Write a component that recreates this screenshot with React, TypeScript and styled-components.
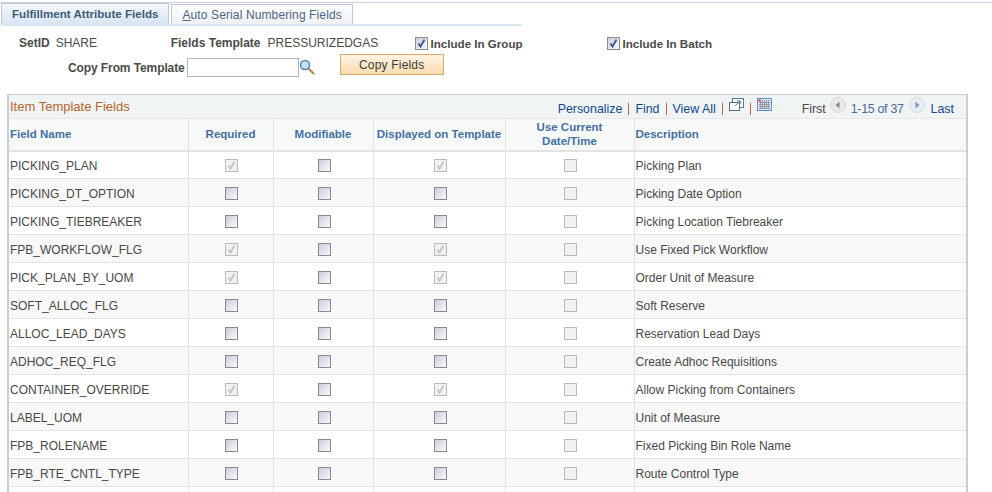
import React from "react";
import styled, { createGlobalStyle } from "styled-components";

const GlobalStyle = createGlobalStyle`
	html, body {
		margin: 0;
		height: 492px;
		overflow: hidden;
		background: #fff;
		font-family: "Liberation Sans", Arial, sans-serif;
		font-size: 12px;
		color: #3d3d3d;
	}
`;

const Page = styled.div`
	width: 992px;
	height: 492px;
	overflow: hidden;
	padding-top: 2px;
	box-sizing: border-box;
`;

const TopLine = styled.div`
	height: 1px;
	background: #c9d3df;
`;

const TabBar = styled.div`
	display: flex;
	align-items: flex-end;
	width: 521px;
	height: 21px;
	margin-left: 1px;
	gap: 2px;
	border-bottom: 2px solid #dbe6f3;
`;

const Tab = styled.div<{ $active?: boolean }>`
	height: ${(p) => (p.$active ? "21px" : "20px")};
	box-sizing: border-box;
	display: flex;
	align-items: center;
	padding: ${(p) => (p.$active ? "0 10px 2px 10px" : "0 10px")};
	border: 1px solid #bfc9d6;
	border-bottom: 0;
	font-size: ${(p) => (p.$active ? "11.6px" : "12px")};
	letter-spacing: ${(p) => (p.$active ? "0" : "0.12px")};
	font-weight: ${(p) => (p.$active ? "bold" : "normal")};
	color: ${(p) => (p.$active ? "#3f5a78" : "#4d6582")};
	background: ${(p) =>
		p.$active
			? "linear-gradient(#f3f7fc, #d9e5f3)"
			: "linear-gradient(#ffffff, #eef0f3)"};
	u {
		text-decoration: underline;
	}
`;

const FormRow = styled.div`
	display: flex;
	align-items: center;
	height: 18px;
	white-space: nowrap;
`;

const FirstRow = styled(FormRow)`
	margin-top: 8px;
	padding-left: 19px;
`;

const SecondRow = styled(FormRow)`
	margin-top: 3px;
	height: 24px;
	padding-left: 68px;
`;

const Label = styled.span`
	font-weight: bold;
	color: #4a4a4a;
`;

const CopyLabel = styled(Label)`
	letter-spacing: -0.1px;
	padding-top: 1px;
`;

const Value = styled.span<{ $width: number; $pad: number }>`
	width: ${(p) => p.$width}px;
	padding-left: ${(p) => p.$pad}px;
	box-sizing: border-box;
	color: #4a4a4a;
`;

const CheckLabel = styled.label<{ $width: number }>`
	display: flex;
	align-items: center;
	gap: 3px;
	width: ${(p) => p.$width}px;
	font-weight: bold;
	font-size: 11.6px;
	color: #4a4a4a;
`;

const TextInput = styled.input`
	width: 112px;
	height: 19px;
	box-sizing: border-box;
	margin: 0 0 0 2px;
	border: 1px solid #b5b5b5;
	background: #fff;
`;

const CopyButton = styled.button`
	width: 104px;
	height: 21px;
	margin: -6px 0 0 25px;
	padding: 1px 0 0;
	border: 1px solid #dca76a;
	background: linear-gradient(#fff4e2, #fbdcb0);
	font-family: inherit;
	font-size: 12px;
	letter-spacing: 0.2px;
	color: #3c3c3c;
`;

const Grid = styled.div`
	margin: 15px 0 0 7px;
	width: 961px;
	border: 1px solid #c9ced3;
	border-width: 1px 2px 0 2px;
	box-sizing: border-box;
`;

const GridBar = styled.div`
	display: flex;
	align-items: center;
	justify-content: space-between;
	height: 23px;
	background: #f1f4f5;
	padding: 0 12px 0 1px;
`;

const GridTitle = styled.span`
	color: #b8642c;
	font-size: 13px;
`;

const Nav = styled.div`
	display: flex;
	align-items: center;
	margin-top: 4px;
	font-size: 12.4px;
	color: #50698a;
`;

const NavLink = styled.span`
	color: #14488f;
`;

const LastLink = styled(NavLink)`
	margin-left: 6px;
`;

const Divider = styled.span`
	width: 1px;
	height: 12px;
	margin: 0 6px;
	background: #c8603c;
`;

const NavIcon = styled.span`
	display: flex;
	transform: translateY(-4px);
`;

const FirstLabel = styled.span`
	margin: 0 4px 0 30px;
	color: #4a4a4a;
`;

const PageRange = styled.span`
	color: #4b6c96;
	margin: 0 5px;
	letter-spacing: -0.3px;
`;

const Table = styled.table`
	border-collapse: collapse;
	table-layout: fixed;
	width: 957px;
`;

const HeadCell = styled.th<{ $left?: boolean }>`
	height: 32px;
	padding: 0 1px 1px;
	box-sizing: border-box;
	background: #f7f8f8;
	border-right: 1px solid #e3e3e3;
	border-bottom: 2px solid #e3e3e3;
	border-top: 1px solid #e8e8e8;
	font-size: 11.5px;
	line-height: 14px;
	color: #44709f;
	text-align: ${(p) => (p.$left ? "left" : "center")};
	&:last-child {
		border-right: 0;
	}
`;

const BodyRow = styled.tr<{ $odd: boolean }>`
	background: ${(p) => (p.$odd ? "#f8f8f8" : "#fff")};
`;

const Cell = styled.td<{ $center?: boolean }>`
	height: 28px;
	padding: ${(p) => (p.$center ? "0 0 0 2px" : "2px 1px 0")};
	box-sizing: border-box;
	border-right: 1px solid #e3e3e3;
	border-bottom: 1px solid #e3e3e3;
	font-size: 12px;
	color: #484848;
	text-align: ${(p) => (p.$center ? "center" : "left")};
	&:last-child {
		border-right: 0;
	}
`;

const Box = styled.span<{ $disabled?: boolean }>`
	display: inline-flex;
	vertical-align: middle;
	width: 13px;
	height: 13px;
	box-sizing: border-box;
	border: 1px solid ${(p) => (p.$disabled ? "#b9b9b9" : "#8a8a8a")};
	background: ${(p) =>
		p.$disabled
			? "#f1f1f1"
			: "linear-gradient(135deg, #c9cddc, #fafafc)"};
	svg {
		display: block;
	}
`;

const Check = ({ checked, disabled }: { checked?: boolean; disabled?: boolean }) => (
	<Box $disabled={disabled}>
		{checked && (
			<svg width="11" height="11" viewBox="0 0 11 11">
				<path
					d="M2.5 5.5 L4.5 8.5 L8.5 1.5"
					fill="none"
					stroke={disabled ? "#c4c4c4" : "#3f4f9a"}
					strokeWidth="1.8"
				/>
			</svg>
		)}
	</Box>
);

const SearchIcon = () => (
	<svg width="16" height="16" viewBox="0 0 16 16">
		<path d="M9.5 9.5 L14.5 14.5" stroke="#b98a4a" strokeWidth="2.4" strokeLinecap="round" />
		<circle cx="6" cy="6" r="4.5" fill="#bfe0f5" stroke="#4f86ad" strokeWidth="1.4" />
	</svg>
);

const PopupIcon = () => (
	<svg width="15" height="14" viewBox="0 0 15 14">
		<rect x="3.5" y="0.5" width="11" height="9" fill="#fff" stroke="#5a7c9c" />
		<rect x="0.5" y="4.5" width="10" height="8" fill="#fff" stroke="#5a6a7c" />
		<path d="M6 8 L11 3 M8 2.8 H11.2 V6" fill="none" stroke="#5a7c9c" />
	</svg>
);

const CalendarIcon = () => (
	<svg width="15" height="13" viewBox="0 0 15 13">
		<rect x="0.5" y="0.5" width="14" height="12" fill="#dfe3ea" stroke="#5b8fd0" />
		<path
			d="M2 4.5H13M2 6.5H13M2 8.5H13M2 10.5H13M3.5 2V11M5.5 2V11M7.5 2V11M9.5 2V11M11.5 2V11"
			stroke="#8a8f99"
			strokeWidth="0.8"
		/>
		<rect x="1.5" y="1.5" width="2" height="2" fill="#e0202a" />
	</svg>
);

const ArrowIcon = ({ right }: { right?: boolean }) => (
	<svg width="16" height="16" viewBox="0 0 16 16">
		<circle cx="8" cy="8" r="7.5" fill={right ? "#e6edf6" : "#e9e9e9"} stroke="#d5d8dc" />
		<path
			d={right ? "M6.5 4.5 L10.5 8 L6.5 11.5 Z" : "M9.5 4.5 L5.5 8 L9.5 11.5 Z"}
			fill={right ? "#7e9cc0" : "#8a8a8a"}
		/>
	</svg>
);

type FieldRow = {
	name: string;
	required?: boolean;
	displayed?: boolean;
	description: string;
};

const rows: FieldRow[] = [
	{ name: "PICKING_PLAN", required: true, displayed: true, description: "Picking Plan" },
	{ name: "PICKING_DT_OPTION", description: "Picking Date Option" },
	{ name: "PICKING_TIEBREAKER", description: "Picking Location Tiebreaker" },
	{ name: "FPB_WORKFLOW_FLG", required: true, displayed: true, description: "Use Fixed Pick Workflow" },
	{ name: "PICK_PLAN_BY_UOM", required: true, displayed: true, description: "Order Unit of Measure" },
	{ name: "SOFT_ALLOC_FLG", description: "Soft Reserve" },
	{ name: "ALLOC_LEAD_DAYS", description: "Reservation Lead Days" },
	{ name: "ADHOC_REQ_FLG", description: "Create Adhoc Requisitions" },
	{ name: "CONTAINER_OVERRIDE", required: true, displayed: true, description: "Allow Picking from Containers" },
	{ name: "LABEL_UOM", description: "Unit of Measure" },
	{ name: "FPB_ROLENAME", description: "Fixed Picking Bin Role Name" },
	{ name: "FPB_RTE_CNTL_TYPE", description: "Route Control Type" },
];

const App = () => (
	<Page>
		<GlobalStyle />
		<TopLine />
		<TabBar>
			<Tab $active>Fulfillment Attribute Fields</Tab>
			<Tab>
				<span>
					<u>A</u>uto Serial Numbering Fields
				</span>
			</Tab>
		</TabBar>
		<FirstRow>
			<Label>SetID</Label>
			<Value $width={121} $pad={6}>SHARE</Value>
			<Label>Fields Template</Label>
			<Value $width={154} $pad={7}>PRESSURIZEDGAS</Value>
			<CheckLabel $width={192}>
				<Check checked />
				Include In Group
			</CheckLabel>
			<CheckLabel $width={140}>
				<Check checked />
				Include In Batch
			</CheckLabel>
		</FirstRow>
		<SecondRow>
			<CopyLabel>Copy From Template</CopyLabel>
			<TextInput />
			<SearchIcon />
			<CopyButton>Copy Fields</CopyButton>
		</SecondRow>
		<Grid>
			<GridBar>
				<GridTitle>Item Template Fields</GridTitle>
				<Nav>
					<NavLink>Personalize</NavLink>
					<Divider />
					<NavLink>Find</NavLink>
					<Divider />
					<NavLink>View All</NavLink>
					<Divider />
					<NavIcon>
						<PopupIcon />
					</NavIcon>
					<Divider />
					<NavIcon>
						<CalendarIcon />
					</NavIcon>
					<FirstLabel>First</FirstLabel>
					<NavIcon>
						<ArrowIcon />
					</NavIcon>
					<PageRange>1-15 of 37</PageRange>
					<NavIcon>
						<ArrowIcon right />
					</NavIcon>
					<LastLink>Last</LastLink>
				</Nav>
			</GridBar>
			<Table>
				<colgroup>
					<col width={179} />
					<col width={85} />
					<col width={100} />
					<col width={132} />
					<col width={129} />
					<col />
				</colgroup>
				<thead>
					<tr>
						<HeadCell $left>Field Name</HeadCell>
						<HeadCell>Required</HeadCell>
						<HeadCell>Modifiable</HeadCell>
						<HeadCell>Displayed on Template</HeadCell>
						<HeadCell>
							Use Current
							<br />
							Date/Time
						</HeadCell>
						<HeadCell $left>Description</HeadCell>
					</tr>
				</thead>
				<tbody>
					{rows.map((row, i) => (
						<BodyRow key={row.name} $odd={i % 2 === 1}>
							<Cell>{row.name}</Cell>
							<Cell $center>
								<Check checked={row.required} disabled={row.required} />
							</Cell>
							<Cell $center>
								<Check />
							</Cell>
							<Cell $center>
								<Check checked={row.displayed} disabled={row.displayed} />
							</Cell>
							<Cell $center>
								<Check disabled />
							</Cell>
							<Cell>{row.description}</Cell>
						</BodyRow>
					))}
					<BodyRow $odd={false}>
						<Cell />
						<Cell />
						<Cell />
						<Cell />
						<Cell />
						<Cell />
					</BodyRow>
				</tbody>
			</Table>
		</Grid>
	</Page>
);

export default App;
